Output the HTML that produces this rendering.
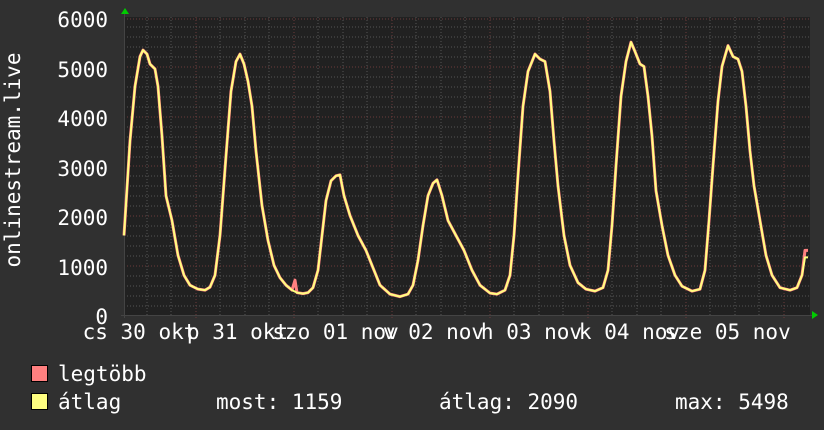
<!DOCTYPE html>
<html><head><meta charset="utf-8"><style>
html,body{margin:0;padding:0;background:#303030;}
svg{display:block}
text{font-family:"DejaVu Sans Mono","Liberation Mono",monospace;fill:#fff;font-size:21px}
</style></head><body>
<svg width="824" height="430" viewBox="0 0 824 430" xmlns="http://www.w3.org/2000/svg">
<rect width="824" height="430" fill="#303030"/>
<rect x="124" y="17" width="686" height="298" fill="#212121"/>
<g stroke="#555" stroke-width="1" stroke-dasharray="1,2">
<line x1="124" x2="810" y1="27" y2="27"/><line x1="124" x2="810" y1="37" y2="37"/><line x1="124" x2="810" y1="47" y2="47"/><line x1="124" x2="810" y1="57" y2="57"/>
<line x1="124" x2="810" y1="77" y2="77"/><line x1="124" x2="810" y1="87" y2="87"/><line x1="124" x2="810" y1="97" y2="97"/><line x1="124" x2="810" y1="107" y2="107"/>
<line x1="124" x2="810" y1="127" y2="127"/><line x1="124" x2="810" y1="137" y2="137"/><line x1="124" x2="810" y1="147" y2="147"/><line x1="124" x2="810" y1="157" y2="157"/>
<line x1="124" x2="810" y1="176" y2="176"/><line x1="124" x2="810" y1="186" y2="186"/><line x1="124" x2="810" y1="196" y2="196"/><line x1="124" x2="810" y1="206" y2="206"/>
<line x1="124" x2="810" y1="226" y2="226"/><line x1="124" x2="810" y1="236" y2="236"/><line x1="124" x2="810" y1="246" y2="246"/><line x1="124" x2="810" y1="256" y2="256"/>
<line x1="124" x2="810" y1="276" y2="276"/><line x1="124" x2="810" y1="286" y2="286"/><line x1="124" x2="810" y1="296" y2="296"/><line x1="124" x2="810" y1="306" y2="306"/>
<line y1="17" y2="315" x1="147" x2="147"/><line y1="17" y2="315" x1="171" x2="171"/><line y1="17" y2="315" x1="220" x2="220"/><line y1="17" y2="315" x1="245" x2="245"/><line y1="17" y2="315" x1="269" x2="269"/>
<line y1="17" y2="315" x1="318" x2="318"/><line y1="17" y2="315" x1="343" x2="343"/><line y1="17" y2="315" x1="367" x2="367"/>
<line y1="17" y2="315" x1="416" x2="416"/><line y1="17" y2="315" x1="441" x2="441"/><line y1="17" y2="315" x1="465" x2="465"/>
<line y1="17" y2="315" x1="514" x2="514"/><line y1="17" y2="315" x1="539" x2="539"/><line y1="17" y2="315" x1="563" x2="563"/>
<line y1="17" y2="315" x1="612" x2="612"/><line y1="17" y2="315" x1="637" x2="637"/><line y1="17" y2="315" x1="661" x2="661"/>
<line y1="17" y2="315" x1="710" x2="710"/><line y1="17" y2="315" x1="735" x2="735"/><line y1="17" y2="315" x1="759" x2="759"/>
</g>
<g stroke="#6a3a3a" stroke-width="1" stroke-dasharray="1,2">
<line x1="124" x2="810" y1="19" y2="19"/><line x1="124" x2="810" y1="67" y2="67"/><line x1="124" x2="810" y1="117" y2="117"/><line x1="124" x2="810" y1="166" y2="166"/><line x1="124" x2="810" y1="216" y2="216"/><line x1="124" x2="810" y1="266" y2="266"/>
<line y1="17" y2="318" x1="196" x2="196"/><line y1="17" y2="318" x1="294" x2="294"/><line y1="17" y2="318" x1="392" x2="392"/><line y1="17" y2="318" x1="490" x2="490"/><line y1="17" y2="318" x1="588" x2="588"/><line y1="17" y2="318" x1="686" x2="686"/><line y1="17" y2="318" x1="784" x2="784"/>
</g>
<line x1="121" x2="812" y1="315.5" y2="315.5" stroke="#444"/>
<line x1="124.5" x2="124.5" y1="12" y2="318" stroke="#444"/>
<polygon points="121,14 125,8 129,14" fill="#0c0"/>
<polygon points="812,311 818,315 812,319" fill="#0c0"/>
<g transform="translate(0,315) scale(1,-0.0497)">
<polyline vector-effect="non-scaling-stroke" fill="none" stroke="#ff8080" stroke-width="3" stroke-linejoin="round" points="124,1600 130,3500 135,4600 140,5200 143,5330 147,5250 150,5050 155,4950 158,4600 162,3600 166,2400 172,1900 178,1200 184,800 190,600 198,520 205,500 210,560 215,800 220,1600 226,3200 231,4500 236,5100 240,5250 244,5050 248,4700 252,4200 256,3300 262,2200 268,1500 274,1000 280,750 286,600 292,500 295,700 297,450 303,430 308,450 313,550 318,900 322,1600 326,2300 331,2700 336,2800 340,2820 344,2400 350,2000 358,1600 366,1300 372,1000 380,600 390,420 400,370 408,420 413,600 418,1100 423,1800 428,2400 433,2650 437,2720 442,2400 448,1900 456,1600 464,1300 472,900 480,600 490,440 497,420 505,500 510,800 514,1600 518,2800 523,4200 528,4900 532,5100 535,5250 540,5150 545,5100 550,4500 554,3500 558,2600 564,1600 570,1000 578,650 586,520 595,480 603,550 608,900 612,1800 616,3000 621,4400 626,5100 631,5490 635,5300 640,5050 644,5000 648,4400 652,3600 656,2500 662,1800 668,1200 675,800 682,580 692,480 700,520 705,900 709,1900 713,3000 718,4300 722,5000 728,5420 733,5200 738,5150 742,4900 746,4200 750,3300 754,2600 760,1900 766,1200 772,800 780,550 790,500 797,550 802,800 805,1300 808,1300"/>
<polyline vector-effect="non-scaling-stroke" fill="none" stroke="#ffff80" stroke-width="2" stroke-linejoin="round" points="124,1600 130,3500 135,4600 140,5200 143,5330 147,5250 150,5050 155,4950 158,4600 162,3600 166,2400 172,1900 178,1200 184,800 190,600 198,520 205,500 210,560 215,800 220,1600 226,3200 231,4500 236,5100 240,5250 244,5050 248,4700 252,4200 256,3300 262,2200 268,1500 274,1000 280,750 286,600 292,500 297,450 303,430 308,450 313,550 318,900 322,1600 326,2300 331,2700 336,2800 340,2820 344,2400 350,2000 358,1600 366,1300 372,1000 380,600 390,420 400,370 408,420 413,600 418,1100 423,1800 428,2400 433,2650 437,2720 442,2400 448,1900 456,1600 464,1300 472,900 480,600 490,440 497,420 505,500 510,800 514,1600 518,2800 523,4200 528,4900 532,5100 535,5250 540,5150 545,5100 550,4500 554,3500 558,2600 564,1600 570,1000 578,650 586,520 595,480 603,550 608,900 612,1800 616,3000 621,4400 626,5100 631,5490 635,5300 640,5050 644,5000 648,4400 652,3600 656,2500 662,1800 668,1200 675,800 682,580 692,480 700,520 705,900 709,1900 713,3000 718,4300 722,5000 728,5420 733,5200 738,5150 742,4900 746,4200 750,3300 754,2600 760,1900 766,1200 772,800 780,550 790,500 797,550 802,800 805,1159 808,1159"/>
</g>
<g text-anchor="end">
<text x="108" y="27">6000</text><text x="108" y="77">5000</text><text x="108" y="126">4000</text><text x="108" y="176">3000</text><text x="108" y="225">2000</text><text x="108" y="275">1000</text><text x="108" y="324">0</text>
</g>
<text transform="translate(20,160) rotate(-90)" text-anchor="middle">onlinestream.live</text>
<g text-anchor="middle">
<text x="139.5" y="339">cs 30 okt</text><text x="237.5" y="339">p 31 okt</text><text x="335.5" y="339">szo 01 nov</text><text x="433.5" y="339">v 02 nov</text><text x="531.5" y="339">h 03 nov</text><text x="629.5" y="339">k 04 nov</text><text x="727.5" y="339">sze 05 nov</text>
</g>
<rect x="31.5" y="365.5" width="16" height="16" fill="#ff8080" stroke="#000"/>
<rect x="31.5" y="393.5" width="16" height="16" fill="#ffff80" stroke="#000"/>
<text x="58" y="381">legtöbb</text>
<text x="58" y="409">átlag</text>
<text x="216" y="409">most: 1159</text>
<text x="439" y="409">átlag: 2090</text>
<text x="675" y="409">max: 5498</text>
</svg>
</body></html>
